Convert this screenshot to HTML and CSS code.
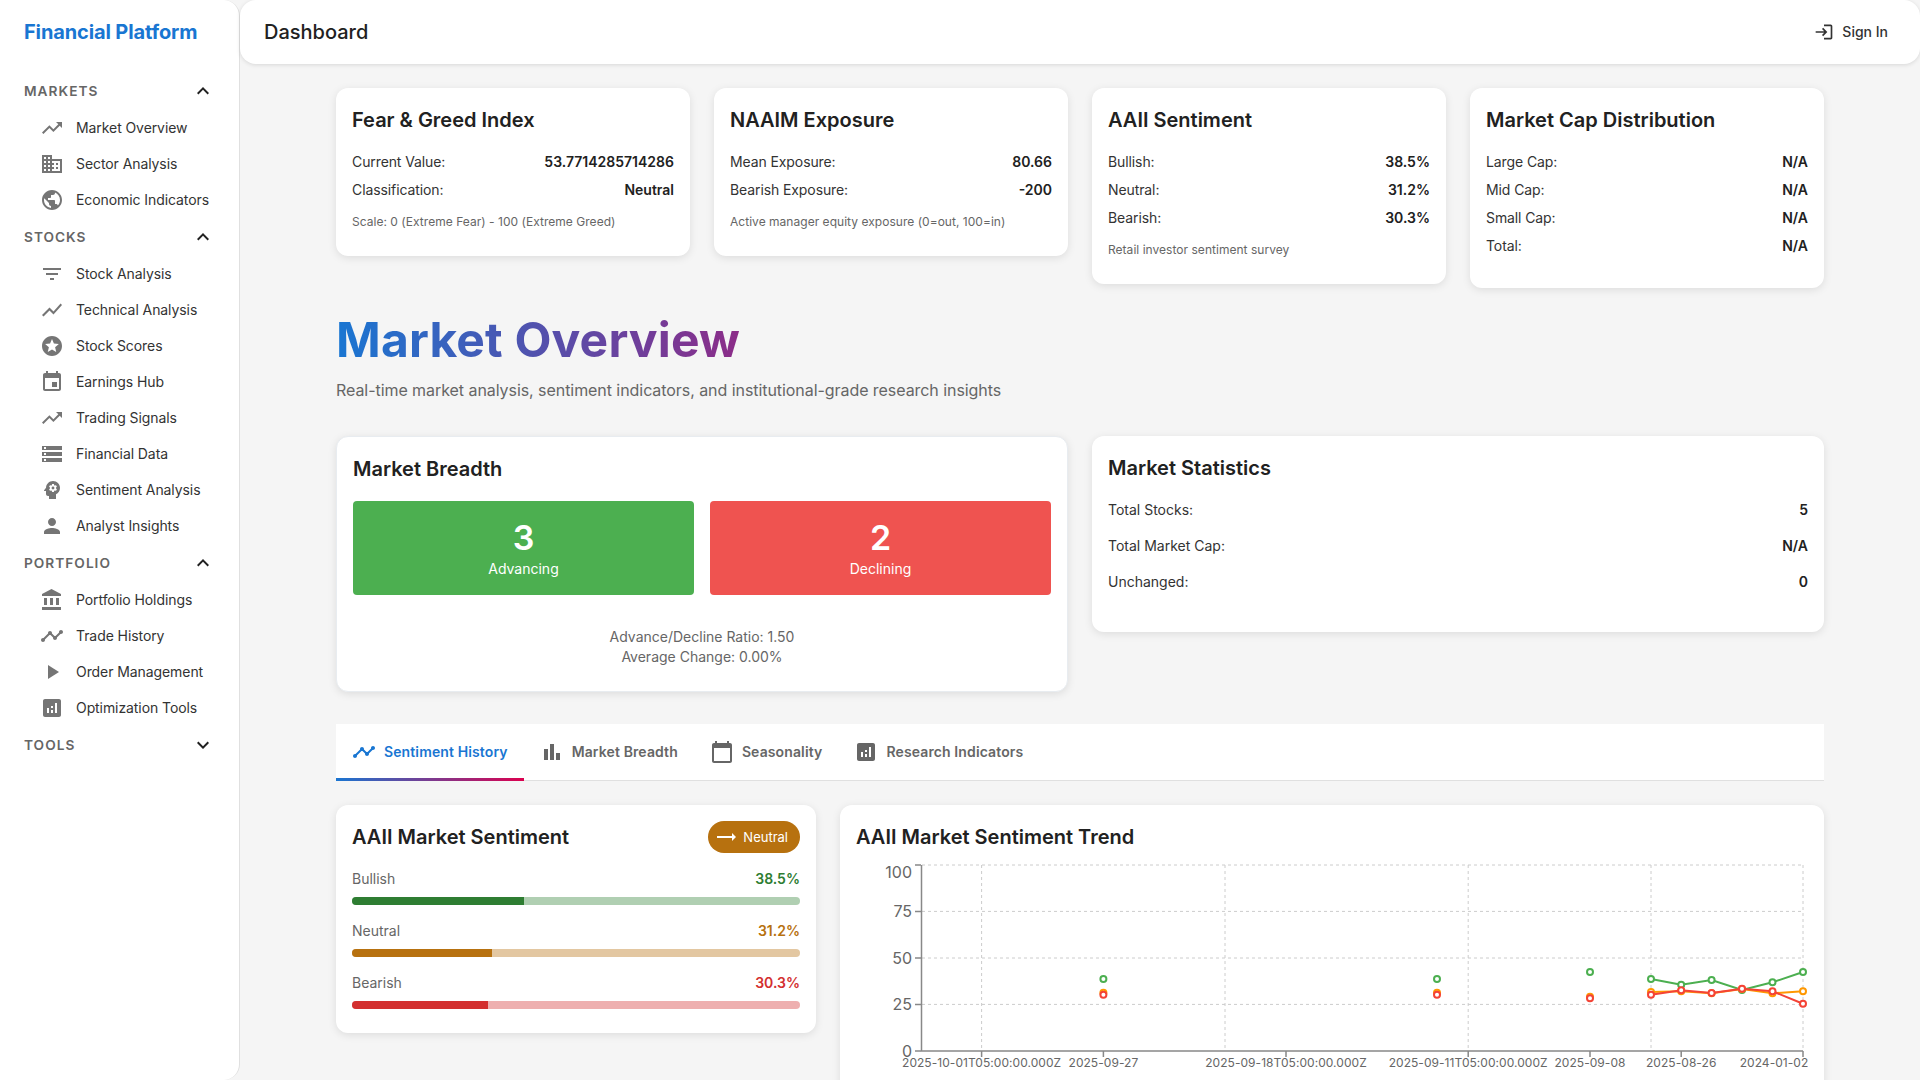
FILE: index.html

```html
<!DOCTYPE html>
<html lang="en">
<head>
  <meta charset="UTF-8" />
  <meta name="viewport" content="width=device-width, initial-scale=1.0" />
  <title>Financial Platform</title>
  <link rel="stylesheet" href="styles.css">
</head>
<body>
  <svg class="sprite" xmlns="http://www.w3.org/2000/svg">
    <symbol id="i-up" viewBox="0 0 24 24"><path d="M16 6l2.29 2.29-4.88 4.88-4-4L2 16.59 3.41 18l6-6 4 4 6.3-6.29L22 12V6z"/></symbol>
    <symbol id="i-business" viewBox="0 0 24 24"><path d="M12 7V3H2v18h20V7H12zM6 19H4v-2h2v2zm0-4H4v-2h2v2zm0-4H4V9h2v2zm0-4H4V5h2v2zm4 12H8v-2h2v2zm0-4H8v-2h2v2zm0-4H8V9h2v2zm0-4H8V5h2v2zm10 12h-8v-2h2v-2h-2v-2h2v-2h-2V9h8v10zm-2-8h-2v2h2v-2zm0 4h-2v2h2v-2z"/></symbol>
    <symbol id="i-public" viewBox="0 0 24 24"><path d="M12 2C6.48 2 2 6.48 2 12s4.48 10 10 10 10-4.48 10-10S17.52 2 12 2zm-1 17.93c-3.95-.49-7-3.85-7-7.93 0-.62.08-1.21.21-1.79L9 15v1c0 1.1.9 2 2 2v1.93zm6.9-2.54c-.26-.81-1-1.39-1.9-1.39h-1v-3c0-.55-.45-1-1-1H8v-2h2c.55 0 1-.45 1-1V7h2c1.1 0 2-.9 2-2v-.41c2.93 1.19 5 4.06 5 7.41 0 2.08-.8 3.97-2.1 5.39z"/></symbol>
    <symbol id="i-filter" viewBox="0 0 24 24"><path d="M10 18h4v-2h-4v2zM3 6v2h18V6H3zm3 7h12v-2H6v2z"/></symbol>
    <symbol id="i-chart" viewBox="0 0 24 24"><path d="M3.5 18.49l6-6.01 4 4L22 6.92l-1.41-1.41-7.09 7.97-4-4L2 16.99z"/></symbol>
    <symbol id="i-stars" viewBox="0 0 24 24"><path d="M11.99 2C6.47 2 2 6.48 2 12s4.47 10 9.99 10C17.52 22 22 17.52 22 12S17.52 2 11.99 2zm4.24 16L12 15.45 7.77 18l1.12-4.81-3.73-3.23 4.92-.42L12 5l1.92 4.53 4.92.42-3.73 3.23L16.23 18z"/></symbol>
    <symbol id="i-event" viewBox="0 0 24 24"><path d="M17 12h-5v5h5v-5zM16 1v2H8V1H6v2H5c-1.11 0-1.99.9-1.99 2L3 19c0 1.1.89 2 2 2h14c1.1 0 2-.9 2-2V5c0-1.1-.9-2-2-2h-1V1h-2zm3 18H5V8h14v11z"/></symbol>
    <symbol id="i-storage" viewBox="0 0 24 24"><path d="M2 20h20v-4H2v4zm2-3h2v2H4v-2zM2 4v4h20V4H2zm4 3H4V5h2v2zm-4 7h20v-4H2v4zm2-3h2v2H4v-2z"/></symbol>
    <symbol id="i-psych" viewBox="0 0 24 24"><path d="M13 8.57c-.79 0-1.43.64-1.43 1.43s.64 1.43 1.43 1.43 1.43-.64 1.43-1.43-.64-1.43-1.43-1.43z"/><path d="M13 3C9.25 3 6.2 5.94 6.02 9.64L4.1 12.2c-.25.33-.01.8.4.8H6v3c0 1.1.9 2 2 2h1v3h7v-4.68c2.36-1.12 4-3.53 4-6.32 0-3.87-3.13-7-7-7zm3 7c0 .13-.01.26-.02.39l.83.66c.08.06.1.16.05.25l-.8 1.39c-.05.09-.16.12-.24.09l-.99-.4c-.21.16-.43.29-.67.39L14 13.83c-.01.1-.1.17-.2.17h-1.6c-.1 0-.18-.07-.2-.17l-.15-1.06c-.25-.1-.47-.23-.68-.39l-.99.4c-.09.03-.2 0-.25-.09l-.8-1.39c-.05-.08-.03-.19.05-.25l.84-.66c-.01-.13-.02-.26-.02-.39s.02-.27.04-.39l-.85-.66c-.08-.06-.1-.16-.05-.26l.8-1.38c.05-.09.15-.12.24-.09l1 .4c.2-.15.43-.29.67-.39L12 6.17c.02-.1.1-.17.2-.17h1.6c.1 0 .18.07.2.17l.15 1.06c.24.1.46.23.67.39l1-.4c.09-.03.2 0 .24.09l.8 1.38c.05.09.03.2-.05.26l-.85.66c.03.12.04.25.04.39z"/></symbol>
    <symbol id="i-person" viewBox="0 0 24 24"><path d="M12 12c2.21 0 4-1.79 4-4s-1.79-4-4-4-4 1.79-4 4 1.79 4 4 4zm0 2c-2.67 0-8 1.34-8 4v2h16v-2c0-2.66-5.33-4-8-4z"/></symbol>
    <symbol id="i-bank" viewBox="0 0 24 24"><path d="M4 10v7h3v-7H4zm6 0v7h3v-7h-3zM2 22h19v-3H2v3zm14-12v7h3v-7h-3zm-4.5-9L2 6v2h19V6l-9.5-5z"/></symbol>
    <symbol id="i-timeline" viewBox="0 0 24 24"><path d="M23 8c0 1.1-.9 2-2 2-.18 0-.35-.02-.51-.07l-3.56 3.55c.05.16.07.34.07.52 0 1.1-.9 2-2 2s-2-.9-2-2c0-.18.02-.36.07-.52l-2.55-2.55c-.16.05-.34.07-.52.07s-.36-.02-.52-.07l-4.55 4.56c.05.16.07.33.07.51 0 1.1-.9 2-2 2s-2-.9-2-2 .9-2 2-2c.18 0 .35.02.51.07l4.56-4.55C8.02 9.36 8 9.18 8 9c0-1.1.9-2 2-2s2 .9 2 2c0 .18-.02.36-.07.52l2.55 2.55c.16-.05.34-.07.52-.07s.36.02.52.07l3.55-3.56C19.02 8.35 19 8.18 19 8c0-1.1.9-2 2-2s2 .9 2 2z"/></symbol>
    <symbol id="i-play" viewBox="0 0 24 24"><path d="M8 5v14l11-7z"/></symbol>
    <symbol id="i-assess" viewBox="0 0 24 24"><path d="M19 3H5c-1.1 0-2 .9-2 2v14c0 1.1.9 2 2 2h14c1.1 0 2-.9 2-2V5c0-1.1-.9-2-2-2zM9 17H7v-5h2v5zm4 0h-2v-3h2v3zm0-5h-2v-2h2v2zm4 5h-2V7h2v10z"/></symbol>
    <symbol id="i-less" viewBox="0 0 24 24"><path d="M12 8l-6 6 1.41 1.41L12 10.83l4.59 4.58L18 14z"/></symbol>
    <symbol id="i-more" viewBox="0 0 24 24"><path d="M16.59 8.59L12 13.17 7.41 8.59 6 10l6 6 6-6z"/></symbol>
    <symbol id="i-login" viewBox="0 0 24 24"><path d="M11 7L9.6 8.4l2.6 2.6H2v2h10.2l-2.6 2.6L11 17l5-5-5-5zm9 12h-8v2h8c1.1 0 2-.9 2-2V5c0-1.1-.9-2-2-2h-8v2h8v14z"/></symbol>
    <symbol id="i-bars" viewBox="0 0 24 24"><path d="M4 9h4v11H4zm12 4h4v7h-4zm-6-9h4v16h-4z"/></symbol>
    <symbol id="i-cal" viewBox="0 0 24 24"><path d="M20 3h-1V1h-2v2H7V1H5v2H4c-1.1 0-2 .9-2 2v16c0 1.1.9 2 2 2h16c1.1 0 2-.9 2-2V5c0-1.1-.9-2-2-2zm0 18H4V8h16v13z"/></symbol>
    <symbol id="i-flat" viewBox="0 0 24 24"><path d="M22 12l-4-4v3H3v2h15v3z"/></symbol>
  </svg>

  <div class="app">
    <aside class="sidebar">
      <div class="logo">Financial Platform</div>

      <div class="nav-head"><span>Markets</span><svg class="chev"><use href="#i-less"/></svg></div>
      <a class="nav-item"><svg class="nav-icon"><use href="#i-up"/></svg>Market Overview</a>
      <a class="nav-item"><svg class="nav-icon"><use href="#i-business"/></svg>Sector Analysis</a>
      <a class="nav-item"><svg class="nav-icon"><use href="#i-public"/></svg>Economic Indicators</a>

      <div class="nav-head"><span>Stocks</span><svg class="chev"><use href="#i-less"/></svg></div>
      <a class="nav-item"><svg class="nav-icon"><use href="#i-filter"/></svg>Stock Analysis</a>
      <a class="nav-item"><svg class="nav-icon"><use href="#i-chart"/></svg>Technical Analysis</a>
      <a class="nav-item"><svg class="nav-icon"><use href="#i-stars"/></svg>Stock Scores</a>
      <a class="nav-item"><svg class="nav-icon"><use href="#i-event"/></svg>Earnings Hub</a>
      <a class="nav-item"><svg class="nav-icon"><use href="#i-up"/></svg>Trading Signals</a>
      <a class="nav-item"><svg class="nav-icon"><use href="#i-storage"/></svg>Financial Data</a>
      <a class="nav-item"><svg class="nav-icon"><use href="#i-psych"/></svg>Sentiment Analysis</a>
      <a class="nav-item"><svg class="nav-icon"><use href="#i-person"/></svg>Analyst Insights</a>

      <div class="nav-head"><span>Portfolio</span><svg class="chev"><use href="#i-less"/></svg></div>
      <a class="nav-item"><svg class="nav-icon"><use href="#i-bank"/></svg>Portfolio Holdings</a>
      <a class="nav-item"><svg class="nav-icon"><use href="#i-timeline"/></svg>Trade History</a>
      <a class="nav-item"><svg class="nav-icon"><use href="#i-play"/></svg>Order Management</a>
      <a class="nav-item"><svg class="nav-icon"><use href="#i-assess"/></svg>Optimization Tools</a>

      <div class="nav-head"><span>Tools</span><svg class="chev"><use href="#i-more"/></svg></div>
    </aside>

    <div class="main">
      <header class="topbar">
        <div class="page-title">Dashboard</div>
        <div class="sign-in"><svg class="sign-icon"><use href="#i-login"/></svg>Sign In</div>
      </header>

      <main class="content">
        <section class="top-cards">
          <div class="card">
            <h6>Fear &amp; Greed Index</h6>
            <div class="row"><span>Current Value:</span><b>53.7714285714286</b></div>
            <div class="row"><span>Classification:</span><b>Neutral</b></div>
            <div class="caption">Scale: 0 (Extreme Fear) - 100 (Extreme Greed)</div>
          </div>
          <div class="card">
            <h6>NAAIM Exposure</h6>
            <div class="row"><span>Mean Exposure:</span><b>80.66</b></div>
            <div class="row"><span>Bearish Exposure:</span><b>-200</b></div>
            <div class="caption">Active manager equity exposure (0=out, 100=in)</div>
          </div>
          <div class="card">
            <h6>AAII Sentiment</h6>
            <div class="row"><span>Bullish:</span><b>38.5%</b></div>
            <div class="row"><span>Neutral:</span><b>31.2%</b></div>
            <div class="row"><span>Bearish:</span><b>30.3%</b></div>
            <div class="caption">Retail investor sentiment survey</div>
          </div>
          <div class="card">
            <h6>Market Cap Distribution</h6>
            <div class="row"><span>Large Cap:</span><b>N/A</b></div>
            <div class="row"><span>Mid Cap:</span><b>N/A</b></div>
            <div class="row"><span>Small Cap:</span><b>N/A</b></div>
            <div class="row"><span>Total:</span><b>N/A</b></div>
          </div>
        </section>

        <section class="hero">
          <h1>Market Overview</h1>
          <p>Real-time market analysis, sentiment indicators, and institutional-grade research insights</p>
        </section>

        <section class="two-cards">
          <div class="card breadth-card">
            <h6>Market Breadth</h6>
            <div class="breadth">
              <div class="breadth-box up"><div class="num">3</div><div>Advancing</div></div>
              <div class="breadth-box down"><div class="num">2</div><div>Declining</div></div>
            </div>
            <div class="breadth-note">Advance/Decline Ratio: 1.50<br>Average Change: 0.00%</div>
          </div>
          <div class="card stats">
            <h6>Market Statistics</h6>
            <div class="row"><span>Total Stocks:</span><b>5</b></div>
            <div class="row"><span>Total Market Cap:</span><b>N/A</b></div>
            <div class="row"><span>Unchanged:</span><b>0</b></div>
          </div>
        </section>

        <nav class="tabs">
          <div class="tab active"><svg class="tab-icon"><use href="#i-timeline"/></svg>Sentiment History</div>
          <div class="tab"><svg class="tab-icon"><use href="#i-bars"/></svg>Market Breadth</div>
          <div class="tab"><svg class="tab-icon"><use href="#i-cal"/></svg>Seasonality</div>
          <div class="tab"><svg class="tab-icon"><use href="#i-assess"/></svg>Research Indicators</div>
        </nav>

        <section class="tab-panel">
          <div class="card">
            <div class="card-head">
              <h6>AAII Market Sentiment</h6>
              <div class="chip"><svg class="chip-icon"><use href="#i-flat"/></svg>Neutral</div>
            </div>
            <div class="meter green">
              <div class="meter-label"><span>Bullish</span><b>38.5%</b></div>
              <div class="track"><div class="fill" style="width: 38.5%"></div></div>
            </div>
            <div class="meter amber">
              <div class="meter-label"><span>Neutral</span><b>31.2%</b></div>
              <div class="track"><div class="fill" style="width: 31.2%"></div></div>
            </div>
            <div class="meter red">
              <div class="meter-label"><span>Bearish</span><b>30.3%</b></div>
              <div class="track"><div class="fill" style="width: 30.3%"></div></div>
            </div>
          </div>

          <div class="card chart-card">
            <h6>AAII Market Sentiment Trend</h6>
            <svg class="chart" viewBox="856 853 952 240" width="952" height="240">
              <g class="grid">
                <path d="M922 865H1803M922 911.4H1803M922 958H1803M922 1004.4H1803"/>
                <path d="M981.6 865V1051M1225 865V1051M1468.2 865V1051M1651 865V1051M1803 865V1051"/>
              </g>
              <g class="axis">
                <path d="M921.5 865V1051H1803"/>
                <path d="M915 865H921M915 911.4H921M915 958H921M915 1004.4H921M915 1051H921"/>
                <path d="M981.6 1051V1057M1103.4 1051V1057M1286 1051V1057M1468.2 1051V1057M1590 1051V1057M1681.2 1051V1057M1803 1051V1057"/>
              </g>
              <g class="y-labels">
                <text x="912" y="878">100</text>
                <text x="912" y="917">75</text>
                <text x="912" y="964">50</text>
                <text x="912" y="1010">25</text>
                <text x="912" y="1057">0</text>
              </g>
              <g class="x-labels">
                <text x="981.6" y="1067">2025-10-01T05:00:00.000Z</text>
                <text x="1103.4" y="1067">2025-09-27</text>
                <text x="1286" y="1067">2025-09-18T05:00:00.000Z</text>
                <text x="1468.2" y="1067">2025-09-11T05:00:00.000Z</text>
                <text x="1590" y="1067">2025-09-08</text>
                <text x="1681.2" y="1067">2025-08-26</text>
                <text x="1774" y="1067">2024-01-02</text>
              </g>
              <g class="series s-green">
                <polyline points="1651,979 1681.2,984.7 1711.6,980 1742,990 1772.5,982.3 1803,972"/>
                <circle cx="1103.4" cy="979" r="3"/><circle cx="1437" cy="979" r="3"/><circle cx="1590" cy="972" r="3"/>
                <circle cx="1651" cy="979" r="3"/><circle cx="1681.2" cy="984.7" r="3"/><circle cx="1711.6" cy="980" r="3"/>
                <circle cx="1742" cy="990" r="3"/><circle cx="1772.5" cy="982.3" r="3"/><circle cx="1803" cy="972" r="3"/>
              </g>
              <g class="series s-amber">
                <polyline points="1651,992 1681.2,991.3 1711.6,993.3 1742,989 1772.5,993.3 1803,991.3"/>
                <circle cx="1103.4" cy="992.7" r="3"/><circle cx="1437" cy="992.7" r="3"/><circle cx="1590" cy="996.7" r="3"/>
                <circle cx="1651" cy="992" r="3"/><circle cx="1681.2" cy="991.3" r="3"/><circle cx="1711.6" cy="993.3" r="3"/>
                <circle cx="1742" cy="989" r="3"/><circle cx="1772.5" cy="993.3" r="3"/><circle cx="1803" cy="991.3" r="3"/>
              </g>
              <g class="series s-red">
                <polyline points="1651,994.7 1681.2,990.3 1711.6,993 1742,988.7 1772.5,991.3 1803,1003.7"/>
                <circle cx="1103.4" cy="994.7" r="3"/><circle cx="1437" cy="994.7" r="3"/><circle cx="1590" cy="998.3" r="3"/>
                <circle cx="1651" cy="994.7" r="3"/><circle cx="1681.2" cy="990.3" r="3"/><circle cx="1711.6" cy="993" r="3"/>
                <circle cx="1742" cy="988.7" r="3"/><circle cx="1772.5" cy="991.3" r="3"/><circle cx="1803" cy="1003.7" r="3"/>
              </g>
            </svg>
          </div>
        </section>
      </main>
    </div>
  </div>
</body>
</html>
```

FILE: styles.css

```css
* {
  box-sizing: border-box;
}
html, body {
  height: 100%;
}
body {
  margin: 0;
  overflow: hidden;
  background-color: #f5f5f5;
  color: #212121;
  font-family: Inter, "Noto Sans", sans-serif;
  font-size: 14px;
  line-height: 20px;
}
.sprite {
  display: none;
}
.app {
  display: flex;
  height: 100vh;
}

/* sidebar */
.sidebar {
  flex: 0 0 240px;
  padding-top: 16px;
  background: #fff;
  border-right: 1px solid #e0e0e0;
  border-radius: 0 16px 16px 0;
}
.logo {
  height: 32px;
  padding-left: 24px;
  margin-bottom: 24px;
  color: #1976d2;
  font-size: 20px;
  font-weight: 700;
  letter-spacing: -0.13px;
  line-height: 32px;
}
.nav-head {
  display: flex;
  align-items: center;
  justify-content: space-between;
  height: 38px;
  padding: 0 24px;
  color: #666;
  font-size: 13.7px;
  font-weight: 600;
  letter-spacing: 1px;
  text-transform: uppercase;
}
.chev {
  width: 24px;
  height: 24px;
  fill: #212121;
}
.nav-item {
  display: flex;
  align-items: center;
  height: 36px;
  padding-left: 40px;
  color: #333;
  font-size: 14px;
  letter-spacing: -0.08px;
}
.nav-icon {
  flex: none;
  width: 24px;
  height: 24px;
  margin-right: 12px;
  fill: #757575;
}

/* top bar */
.main {
  flex: 1;
  min-width: 0;
}
.topbar {
  display: flex;
  align-items: center;
  justify-content: space-between;
  height: 64px;
  padding: 0 32px 0 24px;
  background: #fff;
  border-radius: 16px;
  box-shadow: 0 1px 4px rgba(0, 0, 0, 0.12);
}
.page-title {
  font-size: 20px;
  font-weight: 500;
}
.sign-in {
  display: flex;
  align-items: center;
  color: #333;
  font-weight: 500;
}
.sign-icon {
  width: 20px;
  height: 20px;
  margin-right: 8px;
  fill: #333;
}

/* content */
.content {
  width: 1488px;
  margin: 24px auto 0;
}
.card {
  padding: 16px 16px 24px;
  background: #fff;
  border-radius: 12px;
  box-shadow: 0 2px 8px rgba(0, 0, 0, 0.1);
}
h6 {
  margin: 0 0 16px;
  font-size: 20px;
  font-weight: 600;
  line-height: 32px;
}
.row {
  display: flex;
  justify-content: space-between;
  margin-bottom: 8px;
  color: #333;
}
.row b {
  color: #212121;
  font-weight: 600;
}
.top-cards .row span {
  letter-spacing: -0.1px;
}
.caption {
  margin-top: 12px;
  color: #666;
  font-size: 12px;
  letter-spacing: 0.03px;
}
.top-cards {
  display: grid;
  grid-template-columns: repeat(4, 1fr);
  gap: 24px;
  align-items: start;
}
.hero {
  margin-top: 23px;
}
.hero h1 {
  display: inline-block;
  margin: 0;
  background: linear-gradient(90deg, #1976d2, #8c2c88);
  -webkit-background-clip: text;
  background-clip: text;
  color: transparent;
  font-size: 48px;
  font-weight: 700;
  letter-spacing: 0.17px;
  line-height: 58px;
}
.hero p {
  margin: 9px 0 0;
  color: #666;
  font-size: 16px;
  letter-spacing: -0.06px;
  line-height: 24px;
}
.two-cards {
  display: grid;
  grid-template-columns: repeat(2, 1fr);
  gap: 24px;
  align-items: start;
  margin-top: 34px;
}
.breadth-card {
  border: 1px solid #e8ecf0;
}
.breadth {
  display: grid;
  grid-template-columns: repeat(2, 1fr);
  gap: 16px;
}
.breadth-box {
  padding: 16px;
  border-radius: 4px;
  color: #fff;
  text-align: center;
}
.breadth-box.up {
  background: #4caf50;
}
.breadth-box.down {
  background: #ef5350;
}
.num {
  font-size: 34px;
  font-weight: 600;
  line-height: 42px;
}
.breadth-note {
  margin-top: 32px;
  color: #666;
  text-align: center;
}
.stats .row {
  margin-bottom: 16px;
}

/* tabs */
.tabs {
  display: flex;
  height: 57px;
  margin-top: 32px;
  background: #fff;
  border-bottom: 1px solid #e0e0e0;
}
.tab {
  display: flex;
  align-items: center;
  height: 57px;
  padding: 0 16px 1px;
  color: #666;
  font-weight: 600;
  letter-spacing: 0.12px;
}
.tab.active {
  border-bottom: 3px solid;
  border-image: linear-gradient(90deg, #1976d2, #dc004e) 1;
  color: #1976d2;
  padding-top: 2px;
  padding-bottom: 0;
}
.tab-icon {
  width: 24px;
  height: 24px;
  margin-right: 8px;
  fill: currentColor;
}

/* sentiment panel */
.tab-panel {
  display: grid;
  grid-template-columns: 480px 1fr;
  gap: 24px;
  align-items: start;
  margin-top: 24px;
}
.card-head {
  display: flex;
  align-items: center;
  justify-content: space-between;
  margin-bottom: 16px;
}
.card-head h6 {
  margin: 0;
}
.chip {
  display: flex;
  align-items: center;
  height: 32px;
  padding: 0 12px 0 6px;
  background: #b7710f;
  border-radius: 16px;
  color: #fff;
  font-size: 13px;
}
.chip-icon {
  width: 24px;
  height: 24px;
  margin-right: 5px;
  fill: #fff;
}
.meter {
  margin-bottom: 16px;
}
.meter:last-child {
  margin-bottom: 0;
}
.meter-label {
  display: flex;
  justify-content: space-between;
  margin-bottom: 8px;
  color: #666;
}
.meter-label b {
  font-weight: 600;
}
.track {
  height: 8px;
  overflow: hidden;
  border-radius: 4px;
}
.fill {
  height: 100%;
}
.green b { color: #2e7d32; }
.green .track { background: #b0cfb2; }
.green .fill { background: #2e7d32; }
.amber b { color: #b7710f; }
.amber .track { background: #e3c7a1; }
.amber .fill { background: #b7710f; }
.red b { color: #d32f2f; }
.red .track { background: #eeafaf; }
.red .fill { background: #d32f2f; }

/* chart */
.chart-card h6 {
  margin-bottom: 0;
}
.chart {
  display: block;
}
.grid path {
  fill: none;
  stroke: #ccc;
  stroke-dasharray: 3 3;
}
.axis path {
  fill: none;
  stroke: #888;
  stroke-width: 1.5;
}
.y-labels text {
  fill: #666;
  font-size: 16px;
  text-anchor: end;
}
.x-labels text {
  fill: #666;
  font-size: 12px;
  letter-spacing: 0.05px;
  text-anchor: middle;
}
.series polyline {
  fill: none;
  stroke-width: 2;
}
.series circle {
  fill: #fff;
  stroke-width: 2;
}
.s-green polyline, .s-green circle { stroke: #4caf50; }
.s-amber polyline, .s-amber circle { stroke: #ff9800; }
.s-red polyline, .s-red circle { stroke: #f44336; }
```
